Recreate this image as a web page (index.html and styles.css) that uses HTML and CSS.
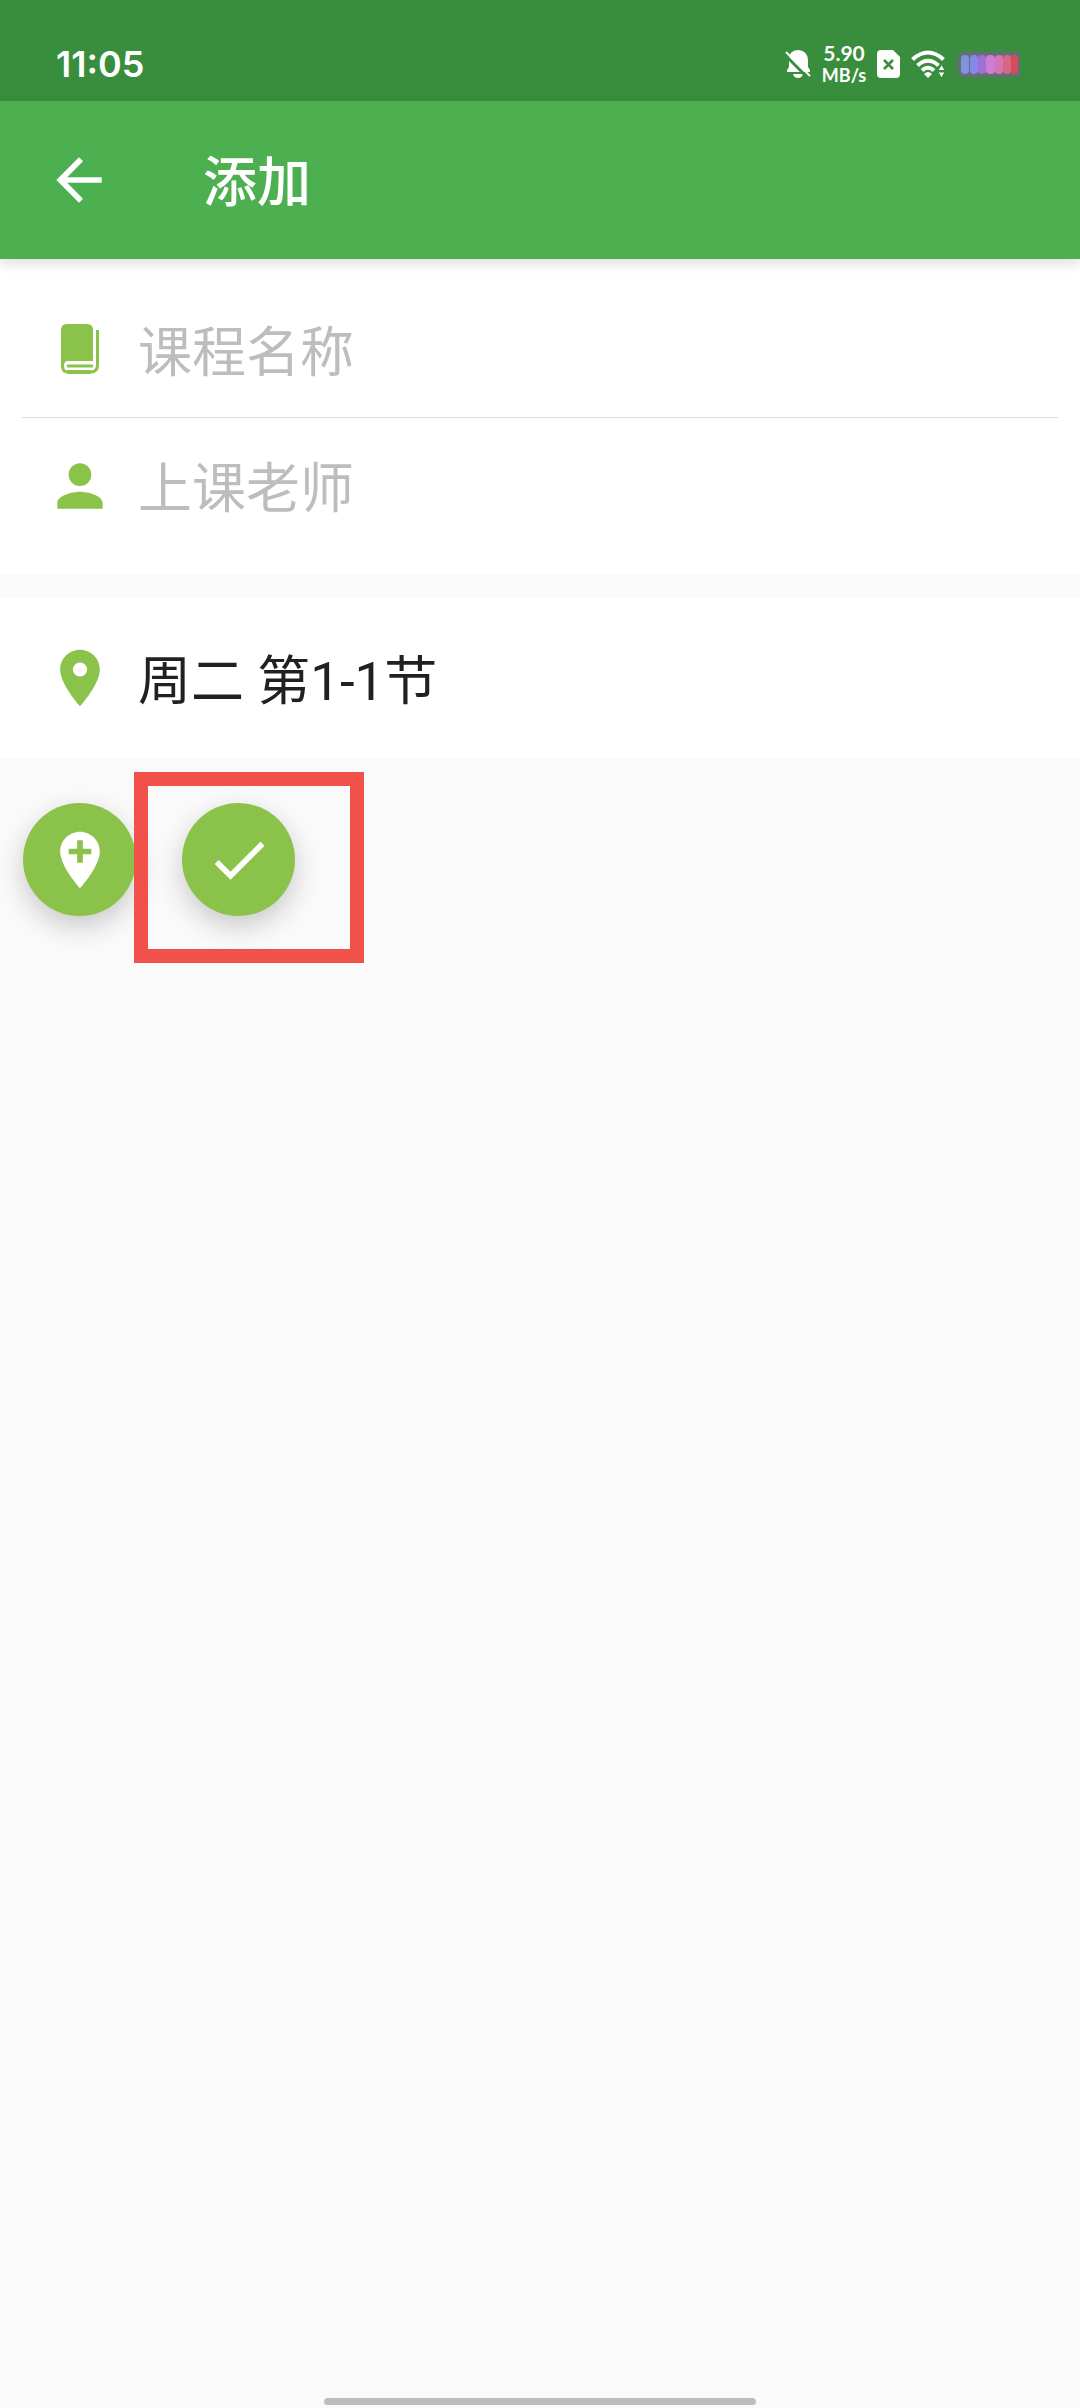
FILE: index.html
```html
<!DOCTYPE html>
<html lang="zh-CN">
<head>
<meta charset="utf-8">
<meta name="viewport" content="width=device-width, initial-scale=1">
<title>添加</title>
<link rel="stylesheet" href="styles.css">
</head>
<body>
<div class="status-bar">
  <time class="clock">11:05</time>
  <div class="status-icons">
    <svg class="bell" viewBox="0 0 26 28" aria-hidden="true">
      <path fill="#fff" d="M2 22v-2l2-3v-7Q4 0 13 0q9 0 10 10v7l2 3v2zM8 24h10q-1 4-5 4t-5-4z"/>
      <path stroke="#388e3c" stroke-width="3" d="M-1 4l25 25"/>
      <path stroke="#fff" stroke-width="2" d="M1 2l24 24"/>
    </svg>
    <div class="speed"><span class="speed-value">5.90</span><span class="speed-unit">MB/s</span></div>
    <svg class="sim" viewBox="0 0 23 28" aria-hidden="true">
      <path fill="#fff" d="M4 0h12l7 7v17a4 4 0 0 1-4 4H4a4 4 0 0 1-4-4V4a4 4 0 0 1 4-4z"/>
      <path stroke="#388e3c" stroke-width="2.6" d="M7 10l9 9M16 10l-9 9"/>
    </svg>
    <svg class="wifi" viewBox="0 0 34 28" aria-hidden="true">
      <g fill="none" stroke="#fff" stroke-width="4">
        <path d="M1.500 9.500Q17-4.500 32.500 9.500"/>
        <path d="M6.500 15.500Q17 6 27.500 15.500"/>
        <path d="M11 20.500Q17 15 23 20.500"/>
      </g>
      <path fill="#fff" d="M13 24q4-4 8 0l-4 4z"/>
      <path fill="#fff" stroke="#388e3c" stroke-width="1" d="M30.500 14.500l3.500 6h-7zM30.500 28l-3.500-6h7z"/>
    </svg>
    <svg class="battery" viewBox="0 0 68 28" aria-hidden="true">
      <defs><filter id="glow" x="-20%" y="-30%" width="140%" height="160%"><feGaussianBlur stdDeviation="1.500"/></filter></defs>
      <rect x="2" y="2" width="62" height="25" rx="4" fill="#6b6c79" filter="url(#glow)"/>
      <rect x="5" y="5" width="8" height="19" rx="4" fill="#7b96dc"/>
      <rect x="14" y="5" width="8" height="19" rx="4" fill="#8388ee"/>
      <rect x="22" y="5" width="8" height="19" rx="4" fill="#a070d8"/>
      <rect x="30" y="5" width="9" height="19" rx="4" fill="#cb7ed6"/>
      <rect x="39" y="5" width="8" height="19" rx="4" fill="#d873b8"/>
      <rect x="47" y="5" width="8" height="19" rx="4" fill="#d66883"/>
      <rect x="55" y="5" width="7" height="19" rx="3" fill="#d64a5c"/>
    </svg>
  </div>
</div>

<header class="app-bar">
  <button class="back" type="button" aria-label="返回">
    <svg class="icon" viewBox="0 0 24 24" aria-hidden="true"><path fill="currentColor" d="M20 11H7.830l5.590-5.590L12 4l-8 8 8 8 1.410-1.410L7.830 13H20v-2z"/></svg>
  </button>
  <h1 class="title">添加</h1>
</header>

<main class="content">
  <form class="card">
    <div class="row">
      <svg class="icon" viewBox="0 0 68 68" aria-hidden="true">
        <path fill="currentColor" d="M21 9h20q6 0 6 6v31H22q-4 0-4 4.500H15V15q0-6 6-6z"/>
        <path fill="none" stroke="currentColor" stroke-width="3" d="M51.500 15v35q0 7-7 7H22q-5.500 0-5.500-6V46"/>
        <path stroke="currentColor" stroke-width="4" d="M21 57h24"/>
        <path stroke="currentColor" stroke-width="3" d="M21 51h26"/>
      </svg>
      <input class="field" type="text" aria-label="课程名称" placeholder="课程名称">
    </div>
    <div class="row">
      <svg class="icon" viewBox="0 0 24 24" aria-hidden="true"><path fill="currentColor" d="M12 12c2.210 0 4-1.790 4-4s-1.790-4-4-4-4 1.790-4 4 1.790 4 4 4zm0 2c-2.670 0-8 1.340-8 4v2h16v-2c0-2.660-5.330-4-8-4z"/></svg>
      <input class="field" type="text" aria-label="上课老师" placeholder="上课老师">
    </div>
  </form>

  <button class="slot" type="button">
    <svg class="icon" viewBox="0 0 24 24" aria-hidden="true"><path fill="currentColor" d="M12 2C8.130 2 5 5.130 5 9c0 5.250 7 13 7 13s7-7.750 7-13c0-3.870-3.130-7-7-7zm0 9.500a2.500 2.500 0 0 1 0-5 2.500 2.500 0 0 1 0 5z"/></svg>
    <span class="slot-text">周二 第1-1节</span>
  </button>

  <div class="actions">
    <button class="fab" type="button" aria-label="添加时间地点">
      <svg class="icon" viewBox="0 0 24 24" aria-hidden="true"><path fill="currentColor" d="M12 2C8.140 2 5 5.140 5 9c0 5.250 7 13 7 13s7-7.750 7-13c0-3.860-3.140-7-7-7zm4 8h-3v3h-2v-3H8V8h3V5h2v3h3v2z"/></svg>
    </button>
    <div class="marked">
      <button class="fab" type="button" aria-label="完成">
        <svg class="icon" viewBox="0 0 24 24" aria-hidden="true"><path fill="currentColor" d="M9 16.170L4.830 12l-1.420 1.410L9 19 21 7l-1.410-1.410z"/></svg>
      </button>
      <div class="marker"></div>
    </div>
  </div>
</main>

<div class="home-indicator"></div>
</body>
</html>
```
FILE: styles.css
```css
* {
  box-sizing: border-box;
}

body {
  margin: 0;
  min-height: 100vh;
  display: flex;
  flex-direction: column;
  background: #fafafa;
  color: #212121;
  font-family: Roboto, "Noto Sans CJK SC", sans-serif;
}

button,
input {
  margin: 0;
  padding: 0;
  border: 0;
  background: none;
  font: inherit;
  color: inherit;
}

.icon {
  display: block;
  flex: none;
  width: 68px;
  height: 68px;
}

/* Status bar */
.status-bar {
  display: flex;
  align-items: center;
  justify-content: space-between;
  height: 101px;
  padding: 26px 56px 0;
  background: #388e3c;
  color: #fff;
  font-family: Inter, sans-serif;
}

.clock {
  font-size: 36px;
  font-weight: 600;
  line-height: 44px;
}

.status-icons {
  display: flex;
  align-items: center;
  gap: 11px;
}

.bell {
  width: 26px;
  height: 28px;
}

.speed {
  display: flex;
  flex-direction: column;
  align-items: center;
  width: 44px;
  font-family: Lato, sans-serif;
  font-weight: 700;
  line-height: 22px;
}

.speed-value {
  font-size: 21px;
}

.speed-unit {
  font-size: 18px;
}

.sim {
  width: 23px;
  height: 28px;
}

.wifi {
  width: 34px;
  height: 28px;
}

.battery {
  width: 68px;
  height: 28px;
}

/* App bar */
.app-bar {
  position: relative;
  display: flex;
  align-items: center;
  gap: 90px;
  height: 158px;
  padding: 0 45px;
  background: #4caf50;
  color: #fff;
  box-shadow: 0 4px 12px rgba(0, 0, 0, 0.14);
}

.title {
  margin: 0;
  padding-top: 8px;
  font-size: 54px;
  font-weight: 500;
  line-height: 80px;
}

/* Form */
.content {
  flex: 1;
}

.card {
  padding: 22px;
  background: #fff;
}

.row {
  display: flex;
  align-items: center;
  gap: 24px;
  height: 136px;
  padding: 0 24px;
}

.row + .row {
  border-top: 1px solid #dcdcdc;
}

.row .icon,
.slot .icon {
  color: #8bc34a;
}

.field {
  flex: 1;
  min-width: 0;
  height: 88px;
  padding-top: 8px;
  font-size: 54px;
  outline: 0;
}

.field::placeholder {
  color: #bdbdbd;
  opacity: 1;
}

.slot {
  display: flex;
  align-items: center;
  gap: 24px;
  width: 100%;
  height: 160px;
  margin-top: 23px;
  padding: 0 46px;
  background: #fff;
  text-align: left;
}

.slot-text {
  padding-top: 8px;
  font-size: 53px;
  line-height: 80px;
}

/* Round action buttons */
.actions {
  display: flex;
  gap: 46px;
  padding: 45px 23px;
}

.fab {
  display: flex;
  align-items: center;
  justify-content: center;
  width: 113px;
  height: 113px;
  border-radius: 50%;
  background: #8bc34a;
  color: #fff;
  box-shadow: 0 10px 28px rgba(0, 0, 0, 0.2);
}

.marked {
  position: relative;
}

.marker {
  position: absolute;
  top: -31px;
  left: -48px;
  width: 230px;
  height: 191px;
  border: 14px solid #f0524b;
  pointer-events: none;
}

/* Gesture bar */
.home-indicator {
  width: 40%;
  height: 7px;
  margin: 0 auto 3px;
  border-radius: 4px;
  background: #bdbdbd;
}
```
